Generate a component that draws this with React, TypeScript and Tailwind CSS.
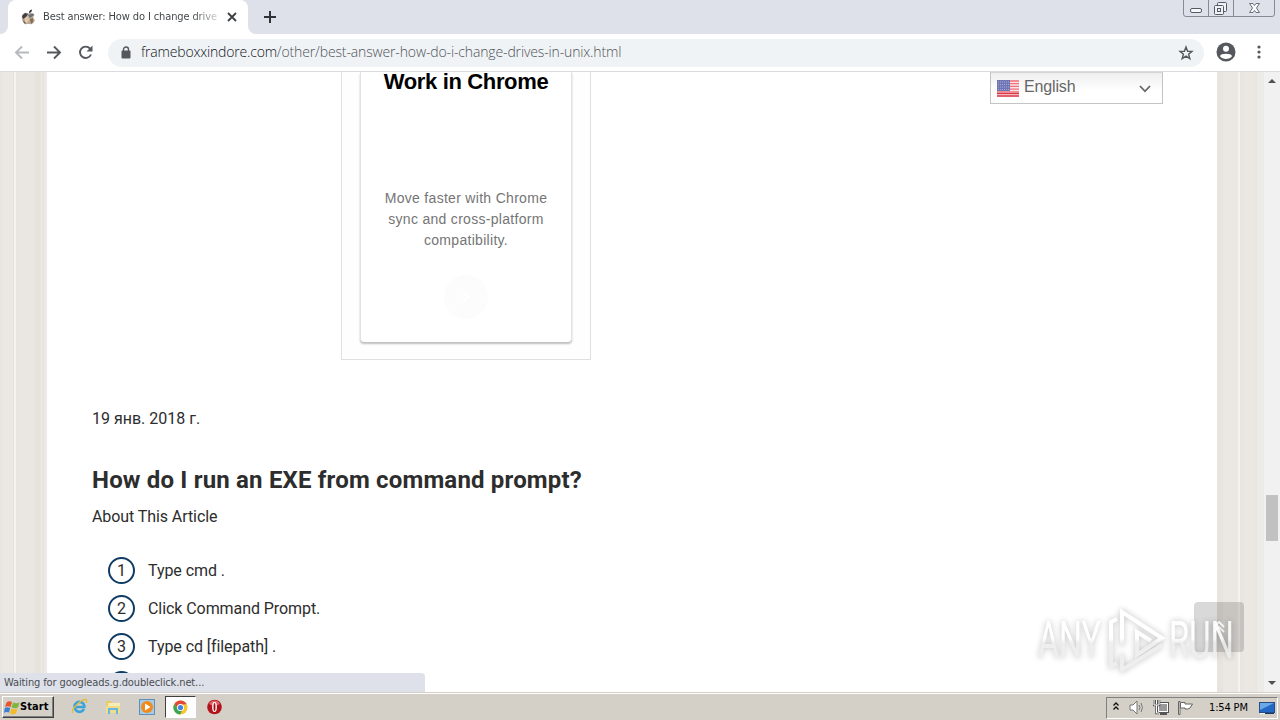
import React from "react";

const steps = ["Type cmd .", "Click Command Prompt.", "Type cd [filepath] ."];

function AppleIcon() {
  return (
    <svg width="15" height="16" viewBox="0 0 15 16">
      <path d="M8 4C8 2 9 .8 11 .5C11 2.500 10 3.800 8 4Z" fill="#333" />
      <path d="M7.500 4.500C5 3 1 4 .8 8C.8 12 3 15.500 5 15.300C6.500 15 8 15 9.500 15.300C12 15.500 13.500 12.500 14 11C12 10 12 7 13.600 6C12 3.800 9.500 3.800 7.500 4.500Z" fill="#b9aa9b" />
      <path d="M1 7L4 4L7 5L5 8L2 10Z" fill="#3f3e42" />
      <path d="M7 6L12 4.500L13 6L9 9Z" fill="#66717c" />
      <path d="M4 9L7 7L8 11L6 14L4 13Z" fill="#e3c9a8" />
      <path d="M9 10L12 9L12 13L10 15Z" fill="#8b6a4c" />
      <path d="M2 11L4 13L5 15L3 14Z" fill="#6b5a4d" />
    </svg>
  );
}

function TabStrip() {
  return (
    <div className="flex h-[34px] bg-[#dee1e9]">
      <div className="flex w-2 items-end bg-white">
        <div className="h-full w-2 rounded-br-lg bg-[#dee1e9]" />
      </div>
      <div className="flex w-[240px] items-center rounded-t-lg bg-white pl-[13px]">
        <AppleIcon />
        <div className="ml-[7px] w-[175px] overflow-hidden whitespace-nowrap bg-gradient-to-r from-[#3c4043] from-85% to-[#d8d9da] bg-clip-text pt-px font-['DejaVu_Sans_Condensed',sans-serif] text-[11px] tracking-[-0.12px] text-transparent">
          Best answer: How do I change drive
        </div>
        <svg className="ml-[9px]" width="10" height="10" viewBox="0 0 10 10" stroke="#3c4043" strokeWidth="1.800">
          <path d="M1 1L9 9M9 1L1 9" />
        </svg>
      </div>
      <div className="flex w-2 items-end bg-white">
        <div className="h-full w-2 rounded-bl-lg bg-[#dee1e9]" />
      </div>
      <svg className="ml-2 mt-[11px]" width="12" height="12" viewBox="0 0 12 12" stroke="#303338" strokeWidth="2">
        <path d="M6 0V12M0 6H12" />
      </svg>
      <svg className="ml-auto mr-[4px]" width="94" height="18" viewBox="0 0 94 18" fill="none" stroke="#858a96">
        <path d="M1.500 0V14Q1.500 16.500 4 16.500H90Q92.500 16.500 92.500 14V0M26.500 0V16M51.500 0V16" />
        <rect x="8.500" y="8.500" width="11" height="4" rx="1.500" fill="#f7f8fa" stroke="#555a66" />
        <g stroke="#555a66" fill="#f0f1f5">
          <rect x="35.500" y="2.500" width="9" height="9" rx="1" />
          <rect x="32.500" y="5.500" width="9" height="9" rx="1" />
          <rect x="35.500" y="8.500" width="3" height="3" />
        </g>
        <path d="M67.500 3.500H71L72.500 5.500L74 3.500H77.500L74.500 8L77.500 12.500H74L72.500 10.500L71 12.500H67.500L70.500 8Z" fill="#f7f8fa" stroke="#6b707c" />
      </svg>
    </div>
  );
}

function Toolbar() {
  return (
    <div className="flex h-[38px] items-center border-b border-[#d9dbde] bg-white">
      <svg className="ml-[14px]" width="16" height="16" viewBox="0 0 16 16" fill="none" stroke="#b7b9bc" strokeWidth="1.900">
        <path d="M15 7.500H2M8 1.500L2 7.500L8 13.500" />
      </svg>
      <svg className="ml-4" width="16" height="16" viewBox="0 0 16 16" fill="none" stroke="#55585c" strokeWidth="1.900">
        <path d="M1 7.500H14M8 1.500L14 7.500L8 13.500" />
      </svg>
      <svg className="ml-4" width="16" height="16" viewBox="0 0 16 16" fill="none" stroke="#55585c" strokeWidth="1.900">
        <path d="M13 9.500A5.700 5.700 0 1 1 12 3.500L13.500 5" />
        <path d="M14.500 .5V6.500H8.500Z" fill="#55585c" stroke="none" />
      </svg>
      <div className="ml-[14px] flex h-7 w-[1096px] items-center rounded-full bg-[#f0f3f6] pl-[13px] pr-[10px]">
        <svg className="mb-px" width="10" height="13" viewBox="0 0 10 13">
          <rect x="0.500" y="4.500" width="9" height="8" rx="1" fill="#54575c" />
          <path d="M2.500 5V3.500A2.500 2.500 0 0 1 7.500 3.500V5" fill="none" stroke="#54575c" strokeWidth="1.400" />
        </svg>
        <div className="mb-[2px] ml-[10px] whitespace-nowrap font-['Open_Sans',sans-serif] text-sm font-light leading-5 tracking-[-0.14px] text-[#4f5357]">
          <span className="tracking-[-0.18px] text-[#111418]">frameboxxindore.com</span>
          /other/best-answer-how-do-i-change-drives-in-unix.html
        </div>
        <svg className="ml-auto" width="16" height="16" viewBox="0 0 16 16" fill="none" stroke="#54575c" strokeWidth="1.400">
          <path d="M8 2L9.600 6.200L14 6.400L10.600 9.200L11.800 13.600L8 11.100L4.200 13.600L5.400 9.200L2 6.400L6.400 6.200Z" />
        </svg>
      </div>
      <svg className="mb-px ml-3" width="20" height="20" viewBox="0 0 20 20">
        <circle cx="10" cy="10" r="9.500" fill="#54575c" />
        <circle cx="10" cy="6.800" r="3" fill="#fff" />
        <path d="M4 14.200C4.500 11 15.500 11 16 14.200C13.500 17.800 6.500 17.800 4 14.200Z" fill="#fff" />
      </svg>
      <svg className="mb-px ml-[21px]" width="4" height="14" viewBox="0 0 4 14" fill="#54575c">
        <circle cx="2" cy="2" r="1.600" />
        <circle cx="2" cy="7" r="1.600" />
        <circle cx="2" cy="12" r="1.600" />
      </svg>
    </div>
  );
}

function LanguageSelect() {
  return (
    <div className="absolute left-[990px] top-0 flex h-8 w-[173px] items-center border border-t-[#d5d5d5] border-[#c4c4c4] bg-gradient-to-b from-[#efefef] to-white to-60% pl-[6px] pr-[11px]">
      <svg width="22" height="17" viewBox="0 0 22 17">
        <rect width="22" height="17" fill="#f6e4e6" />
        <path d="M0 1H22M0 3.700H22M0 6.400H22M0 9.100H22M0 11.800H22" stroke="#ef6f7a" strokeWidth="1.300" />
        <path d="M0 13.500H22M0 16H22" stroke="#dc3545" strokeWidth="1.600" />
        <rect width="13" height="11" fill="#6e74b4" />
        <path d="M1 2H12M1 4.500H12M1 7H12M1 9.500H12" stroke="#a9aed6" strokeDasharray="1 1" />
      </svg>
      <span className="mb-[3px] ml-[5px] font-['Liberation_Sans',Arial,sans-serif] text-base leading-5 tracking-[-0.15px] text-[#666]">English</span>
      <svg className="ml-auto mt-[2px]" width="12" height="8" viewBox="0 0 12 8" fill="none" stroke="#666" strokeWidth="1.800">
        <path d="M1 1L6 6.300L11 1" />
      </svg>
    </div>
  );
}

function AdCard() {
  return (
    <div className="ml-[294px] h-[288px] w-[250px] border border-t-0 border-[#e0e0e0] bg-[#fefefe] px-[18px]">
      <div className="flex h-[270px] flex-col items-center rounded-b border-x border-[#e2e2e2] bg-white text-center font-['Liberation_Sans',Arial,sans-serif] shadow-[0_2px_2px_rgba(0,0,0,0.25)]">
        <h3 className="whitespace-nowrap text-[22px] font-bold leading-5 tracking-[-0.35px] text-black">Work in Chrome</h3>
        <p className="mt-[96px] w-[180px] text-sm leading-[21px] tracking-[0.3px] text-[#757575]">
          Move faster with Chrome sync and cross-platform compatibility.
        </p>
        <div className="mt-[24px] flex size-11 items-center justify-center rounded-full bg-[#fbfcfb]">
          <svg width="8" height="12" viewBox="0 0 8 12" fill="none" stroke="#fff" strokeWidth="2">
            <path d="M1 1L6 6L1 11" />
          </svg>
        </div>
      </div>
    </div>
  );
}

function Article() {
  return (
    <div className="w-[1170px] bg-white">
      <AdCard />
      <div className="pl-[45px] font-['Roboto',sans-serif] text-base text-[#2d2d2d]">
        <p className="mt-[47px] leading-6">19 янв. 2018 г.</p>
        <h2 className="mt-[33px] text-2xl font-bold leading-8 tracking-[0.18px]">How do I run an EXE from command prompt?</h2>
        <p className="mt-[9px] leading-6 tracking-[-0.08px]">About This Article</p>
        <ol className="mt-[28px] space-y-[11px] pl-4 tracking-[-0.07px]">
          {steps.map((step, i) => (
            <li key={i} className="flex h-[27px] items-center">
              <span className="flex size-[27px] items-center justify-center rounded-full border-2 border-[#0f3c64] leading-none">{i + 1}</span>
              <span className="ml-[13px]">{step}</span>
            </li>
          ))}
          <li className="flex h-[27px]">
            <span className="size-[27px] rounded-full border-2 border-[#0f3c64]" />
          </li>
        </ol>
      </div>
    </div>
  );
}

function Scrollbar() {
  return (
    <div className="flex h-full w-4 flex-col items-center bg-[#f1f1f1]">
      <svg className="mt-[7px]" width="8" height="4" viewBox="0 0 8 4" fill="#505050">
        <path d="M0 4L4 0L8 4Z" />
      </svg>
      <div className="mt-[412px] h-[46px] w-[12px] bg-[#c1c1c1]" />
      <svg className="mb-[7px] mt-auto" width="8" height="4" viewBox="0 0 8 4" fill="#505050">
        <path d="M0 0L4 4L8 0Z" />
      </svg>
    </div>
  );
}

function Watermark() {
  return (
    <svg
      className="absolute left-[1030px] top-[530px] overflow-visible opacity-85 drop-shadow-[0_0_3px_rgba(0,0,0,0.3)]"
      width="212"
      height="76"
      viewBox="0 0 212 76"
      fill="none"
      stroke="url(#markFade)"
      strokeWidth="4"
    >
      <defs>
        <linearGradient id="markFade" gradientUnits="userSpaceOnUse" x1="0" y1="0" x2="0" y2="76">
          <stop offset="0.480" stopColor="#fff" />
          <stop offset="0.540" stopColor="#ececec" />
        </linearGradient>
      </defs>
      <g fill="url(#markFade)" stroke="none" fontFamily="Roboto, sans-serif" fontSize="51">
        <text x="8" y="56" textLength="63" lengthAdjust="spacingAndGlyphs">ANY</text>
        <text x="139" y="56" textLength="65" lengthAdjust="spacingAndGlyphs">RUN</text>
      </g>
      <path d="M87 17L81 20V64L87 61" />
      <path d="M92 44V10L132 36L107 53V30L121 39" />
      <path d="M92 52V68L132 43" />
    </svg>
  );
}

function Taskbar() {
  return (
    <div className="flex h-7 items-center border-t border-[#d4d0c8] bg-[#d4d0c8] shadow-[inset_0_1px_0_#fff]">
      <div className="ml-[2px] mt-[1px] flex h-[22px] w-[52px] items-center border border-b-[#404040] border-l-white border-r-[#404040] border-t-white pl-[1px] shadow-[inset_-1px_-1px_0_#808080]">
        <svg width="16" height="15" viewBox="0 0 16 15">
          <path d="M2.500 2.500Q5 .5 8 2L6.500 7Q4 5.500 1 7Z" fill="#e8562a" />
          <path d="M9 2.500Q12 4 15.500 2.500L14 7.500Q11 9 7.500 7.500Z" fill="#7db63c" />
          <path d="M.8 8Q3.500 6.500 6.200 8L5 12.500Q2 11.500 0 13Z" fill="#3b7fd0" />
          <path d="M7.200 8.500Q10 10 13.500 8.500L12 13.500Q9 15 5.800 13.500Z" fill="#f3bb2b" />
        </svg>
        <span className="font-['DejaVu_Sans_Condensed',sans-serif] text-[11px] font-bold tracking-[0.1px] text-black">Start</span>
      </div>
      <svg className="ml-[17px]" width="17" height="17" viewBox="0 0 17 17" fill="none">
        <path d="M13 11A5 5 0 1 1 13.300 7.500V9H5" stroke="#3aa3dc" strokeWidth="2.600" />
        <path d="M2 15C-1 12 10 1 15 1.500C16 2 16 3 15 5" stroke="#e5b93c" strokeWidth="1.300" />
      </svg>
      <svg className="ml-[17px]" width="16" height="16" viewBox="0 0 16 16">
        <path d="M1 2H6L7 4H14V14H1Z" fill="#e9ca68" />
        <path d="M3 4H15V9H3Z" fill="#f7edb3" />
        <path d="M1 7H15V14H1Z" fill="#f1dc88" />
        <path d="M4 15V10H12V15" fill="none" stroke="#67b8df" strokeWidth="2" />
      </svg>
      <svg className="ml-[18px]" width="16" height="16" viewBox="0 0 16 16">
        <rect x=".5" y=".5" width="15" height="15" fill="#a8cbe5" stroke="#5d91b9" />
        <circle cx="8" cy="8" r="6" fill="#f28a1b" />
        <path d="M6 4.500L11.500 8L6 11.500Z" fill="#fff" />
      </svg>
      <div className="ml-[10px] mt-[1px] flex h-[22px] w-[31px] items-center justify-center border border-b-white border-l-[#404040] border-r-white border-t-[#404040] bg-[#fdfdfd]">
        <svg width="15" height="15" viewBox="0 0 15 15">
          <circle cx="7.500" cy="7.500" r="7" fill="#f7c52c" />
          <path d="M1.400 4A7 7 0 0 1 13.600 4L7.500 5L5 9Z" fill="#df4a38" />
          <path d="M1.300 4A7 7 0 0 0 7 14.500L10 9L5 9Z" fill="#3da456" />
          <circle cx="7.500" cy="7.500" r="3.500" fill="#fff" />
          <circle cx="7.500" cy="7.500" r="2.600" fill="#4583dc" />
        </svg>
      </div>
      <svg className="ml-[11px] mt-px" width="15" height="16" viewBox="0 0 15 16">
        <circle cx="7.500" cy="8" r="7.300" fill="#b3131b" />
        <path d="M2 5A6 6 0 0 1 13 5Q7 8 2 5" fill="#df6468" />
        <ellipse cx="7.500" cy="8" rx="2.400" ry="5" fill="#fff" />
        <ellipse cx="7.500" cy="8" rx="1" ry="4" fill="#a31118" />
      </svg>
      <div className="ml-auto mr-[2px] mt-[2px] flex h-[22px] w-[172px] items-center border border-b-white border-l-[#808080] border-r-white border-t-[#808080]">
        <svg className="mb-[3px] ml-[6px]" width="6" height="8" viewBox="0 0 6 8" fill="none" stroke="#111" strokeWidth="1.300">
          <path d="M.5 3.500L3 1L5.500 3.500M.5 7.500L3 5L5.500 7.500" />
        </svg>
        <svg className="ml-[10px]" width="17" height="15" viewBox="0 0 17 15" fill="none" stroke="#777">
          <path d="M1 5H4L8 1V14L4 10H1Z" fill="#fff" />
          <path d="M10 5Q12 7.500 10 10M12 3Q15 7.500 12 12" />
        </svg>
        <svg className="ml-[7px]" width="17" height="16" viewBox="0 0 17 16" fill="none">
          <rect x="5.500" y="3.500" width="9" height="8" fill="#999" stroke="#fff" />
          <rect x="4.500" y="2.500" width="11" height="10" stroke="#555" />
          <path d="M7 14H14" stroke="#555" strokeWidth="2" />
          <path d="M1 0V5H6V0M3.500 0V4M3.500 5V13H6" stroke="#555" strokeWidth="2.500" />
          <path d="M1 0V5H6V0M3.500 0V4M3.500 5V13H6" stroke="#fff" />
        </svg>
        <svg className="ml-[7px]" width="17" height="16" viewBox="0 0 17 16" fill="#fff" stroke="#666">
          <path d="M1.500 1.500H3V14.500H1.500ZM3.500 2.500H8V4H15.500L13 8L11 9H8V8H3.500Z" />
        </svg>
        <span className="ml-[15px] mt-px whitespace-nowrap font-['DejaVu_Sans_Condensed',sans-serif] text-[11px] tracking-[-0.15px] text-black">1:54 PM</span>
        <svg className="ml-auto mr-[2px]" width="16" height="14" viewBox="0 0 16 14">
          <rect x=".5" y="1.500" width="15" height="10" fill="#2468c5" stroke="#254c86" />
          <path d="M1 2H15L1 9Z" fill="#6ba8e6" />
          <path d="M1 12H6V13.500H1Z" fill="#eee" />
          <path d="M6 12H15V13H6Z" fill="#193863" />
        </svg>
      </div>
    </div>
  );
}

export default function App() {
  return (
    <div className="flex h-[720px] w-[1280px] flex-col overflow-hidden bg-white">
      <TabStrip />
      <Toolbar />
      <div className="relative flex h-[620px] overflow-hidden">
        {/* Page background stripes */}
        <div className="w-[47px] bg-[linear-gradient(90deg,#e9e5e0_0_3px,#ebe8e4_3px_13px,#e6e3df_13px_14px,#f5f3f0_14px_16px,#e9e5e1_16px_20px,#e9e7e1_20px_35px,#e6e2dc_35px_41px,#f0ede9_41px_42px,#e7e3de_42px_44px,#edeae6_44px_47px)]" />
        <Article />
        <div className="w-[47px] bg-[linear-gradient(90deg,#e7e3de_0_6px,#ebe8e3_6px_21px,#f5f3f0_21px_23px,#e9e5e0_23px_27px,#ebe8e4_27px_38px,#e9e5e0_38px_40px,#edebe8_40px_47px)]" />
        <Scrollbar />
        <LanguageSelect />
        <div className="absolute left-[1194px] top-[530px] flex size-[50px] items-center justify-center rounded-sm bg-black/15">
          <svg width="12" height="12" viewBox="0 0 12 12" fill="none" stroke="#fff" strokeWidth="2">
            <path d="M1 6L6 1L11 6M1 11L6 6L11 11" />
          </svg>
        </div>
        <Watermark />
        <div className="absolute bottom-0 left-0 flex h-[19px] w-[425px] items-center rounded-tr bg-[#dee1e9] pl-1 pt-[2px] font-['DejaVu_Sans_Condensed',sans-serif] text-[11px] tracking-[-0.12px] text-[#4a4d52]">
          Waiting for googleads.g.doubleclick.net...
        </div>
      </div>
      <Taskbar />
    </div>
  );
}
